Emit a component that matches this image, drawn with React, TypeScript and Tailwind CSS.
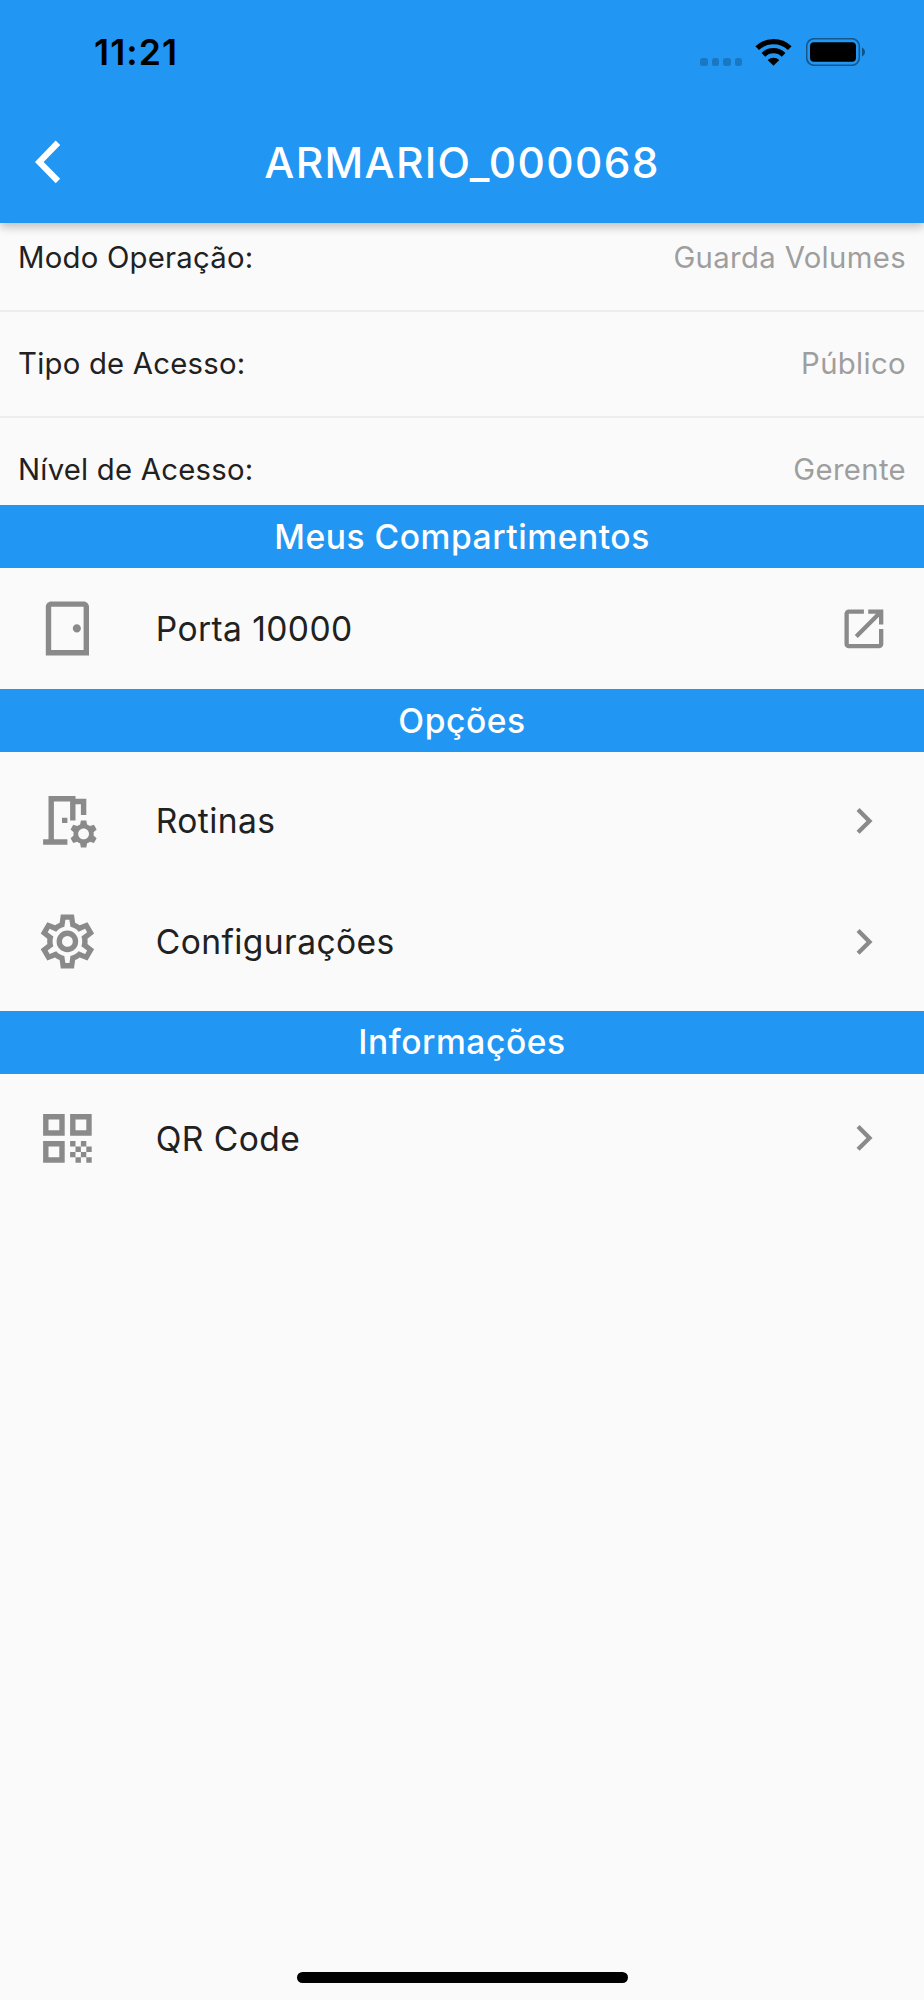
type IconProps = { d: string; className: string };

function Icon({ d, className }: IconProps) {
  return (
    <svg viewBox="0 0 24 24" fill="currentColor" className={className}>
      <path d={d} />
    </svg>
  );
}

const icons = {
  door: "M18 4v16H6V4h12m0-2H6c-1.1 0-2 .9-2 2v18h16V4c0-1.1-.9-2-2-2zm-2.5 8.5c-.83 0-1.5.67-1.5 1.5s.67 1.5 1.5 1.5 1.5-.67 1.5-1.5-.67-1.5-1.5-1.5z",
  doorCog:
    "M3 19h2V3h10v1h4v6h-2V6h-2v6h-2V5H7v14h5v2H3zM10 11h2v2h-2zM21.75 17c0-.22-.03-.42-.06-.63l1.14-1.01-1-1.73-1.45.49c-.32-.27-.68-.48-1.08-.63L19 12h-2l-.3 1.49c-.4.15-.76.36-1.08.63l-1.45-.49-1 1.73 1.14 1.01c-.03.21-.06.41-.06.63s.03.42.06.63l-1.14 1.01 1 1.73 1.45-.49c.32.27.68.48 1.08.63L17 22h2l.3-1.49c.4-.15.76-.36 1.08-.63l1.45.49 1-1.73-1.14-1.01c.03-.21.06-.41.06-.63zM18 19c-1.1 0-2-.9-2-2s.9-2 2-2 2 .9 2 2-.9 2-2 2z",
  cog: "M12 8a4 4 0 0 1 0 8 4 4 0 0 1 0-8m0 2a2 2 0 0 0 0 4 2 2 0 0 0 0-4M9.56 22L9.13 18.93C8.5 18.68 7.96 18.34 7.44 17.94L4.56 19.11 2.12 14.89 4.57 12.97 4.5 12 4.57 11 2.12 9.11 4.56 4.89 7.44 6.05C7.96 5.66 8.5 5.32 9.13 5.07L9.56 2H14.44L14.87 5.07C15.5 5.32 16.04 5.66 16.56 6.05L19.44 4.89 21.88 9.11 19.43 11 19.5 12 19.43 13 21.88 14.89 19.44 19.11 16.56 17.95C16.04 18.34 15.5 18.68 14.87 18.93L14.44 22H9.56M11.25 4L10.88 6.61C9.68 6.86 8.62 7.5 7.85 8.39L5.44 7.35 4.69 8.65 6.8 10.2C6.4 11.37 6.4 12.64 6.8 13.8L4.68 15.36 5.43 16.66 7.86 15.62C8.63 16.5 9.68 17.14 10.87 17.38L11.24 20H12.76L13.13 17.39C14.32 17.14 15.37 16.5 16.14 15.62L18.57 16.66 19.32 15.36 17.2 13.81C17.6 12.64 17.6 11.37 17.2 10.2L19.31 8.65 18.56 7.35 16.15 8.39C15.38 7.5 14.32 6.86 13.12 6.62L12.75 4H11.25Z",
  qrCode:
    "M3 11h8V3H3v8zm2-6h4v4H5V5zM3 21h8v-8H3v8zm2-6h4v4H5v-4zM13 3v8h8V3h-8zm6 6h-4V5h4v4zM19 19h2v2h-2zM13 13h2v2h-2zM15 15h2v2h-2zM13 17h2v2h-2zM15 19h2v2h-2zM17 17h2v2h-2zM17 13h2v2h-2zM19 15h2v2h-2z",
  openInNew:
    "M19 19H5V5h7V3H5a2 2 0 0 0-2 2v14a2 2 0 0 0 2 2h14c1.1 0 2-.9 2-2v-7h-2v7zM14 3v2h3.59l-9.83 9.83 1.41 1.41L19 6.41V10h2V3h-7z",
  chevron: "M10 6L8.59 7.41 13.17 12l-4.58 4.59L10 18l6-6z",
  back: "M11.67 4.2L9.6 2.1 0 12l9.6 9.9 2.07-2.1L4 12z",
};

const details = [
  { label: "Modo Operação:", value: "Guarda Volumes" },
  { label: "Tipo de Acesso:", value: "Público" },
  { label: "Nível de Acesso:", value: "Gerente" },
];

function StatusBar() {
  return (
    <div className="flex h-[101px] items-start justify-between pl-[94px] pr-[59px] pt-[34px] text-black">
      <span className="text-[35.6px] font-semibold leading-[38px] tracking-[1.1px]">11:21</span>
      <div className="flex pt-1">
        <div className="mr-[13px] flex gap-1 pt-5">
          {[0, 1, 2, 3].map((i) => (
            <span key={i} className="size-[7.5px] rounded-[2.5px] bg-black/20" />
          ))}
        </div>
        <svg width="37" height="28" viewBox="0 0 37 28" className="mr-[14px]">
          <g fill="none" stroke="#000" strokeWidth="5.2">
            <path d="M2.2 10.2a23.4 23.4 0 0 1 32.6 0" />
            <path d="M8.4 16.8a14.4 14.4 0 0 1 20.2 0" />
          </g>
          <path d="M18.5 27.8l-5.8-5.8a8.5 8.5 0 0 1 11.6 0z" />
        </svg>
        <svg width="59" height="28" viewBox="0 0 59 28">
          <rect x="0.7" y="0.7" width="52.6" height="26.6" rx="7.5" fill="none" stroke="#000" strokeOpacity="0.42" strokeWidth="1.6" />
          <rect x="4" y="4.2" width="46" height="19.6" rx="4" />
          <path d="M56 9.6c4 2 4 6.8 0 8.8z" fillOpacity="0.45" />
        </svg>
      </div>
    </div>
  );
}

function SectionTitle({ title }: { title: string }) {
  return (
    <h2 className="flex h-[63px] items-center justify-center bg-[#2196f3] pt-px text-[33.6px] font-medium tracking-[0.55px] text-white">
      {title}
    </h2>
  );
}

function Item({ icon, title, trailing = icons.chevron }: { icon: string; title: string; trailing?: string }) {
  return (
    <button className="flex h-[121px] w-full items-center px-[34.5px] text-left">
      <Icon d={icon} className="size-[64.8px] text-[#8a8a8a]" />
      <span className="ml-[56.5px] flex-1 pt-[2px] text-[33.6px] tracking-[0.4px]">{title}</span>
      <Icon d={trailing} className="size-[51.8px] text-[#8a8a8a]" />
    </button>
  );
}

export default function App() {
  return (
    <div className="flex h-[2000px] w-[924px] flex-col overflow-hidden bg-[#fafafa] font-[Inter,sans-serif] text-[#212121]">
      <header className="relative h-[222.5px] shrink-0 bg-[#2196f3] shadow-[0_4px_9px_rgba(0,0,0,0.24)]">
        <StatusBar />
        <div className="grid h-[122px] grid-cols-[100px_1fr_100px] items-center text-white">
          <Icon d={icons.back} className="ml-[35px] size-[51.8px]" />
          <h1 className="pt-px text-center text-[42.4px] font-medium tracking-[1.35px]">ARMARIO_000068</h1>
        </div>
      </header>

      <div className="h-[282.5px] shrink-0 overflow-hidden text-[29.3px]">
        <div className="-mt-[17px]">
          {details.map((row) => (
            <div
              key={row.label}
              className="flex h-[106px] items-center justify-between border-b-2 border-[#ececec] px-[18px] last:h-[104px] last:border-b-0"
            >
              <span className="tracking-[0.23px]">{row.label}</span>
              <span className="tracking-[0.35px] text-[#9e9e9e]">{row.value}</span>
            </div>
          ))}
        </div>
      </div>

      <SectionTitle title="Meus Compartimentos" />
      <Item icon={icons.door} title="Porta 10000" trailing={icons.openInNew} />

      <SectionTitle title="Opções" />
      <div className="pb-[8.5px] pt-2">
        <Item icon={icons.doorCog} title="Rotinas" />
        <Item icon={icons.cog} title="Configurações" />
      </div>

      <SectionTitle title="Informações" />
      <div className="pt-1">
        <Item icon={icons.qrCode} title="QR Code" />
      </div>

      <div className="mx-auto mb-[17.5px] mt-auto h-[11px] w-[331px] rounded-full bg-black" />
    </div>
  );
}
